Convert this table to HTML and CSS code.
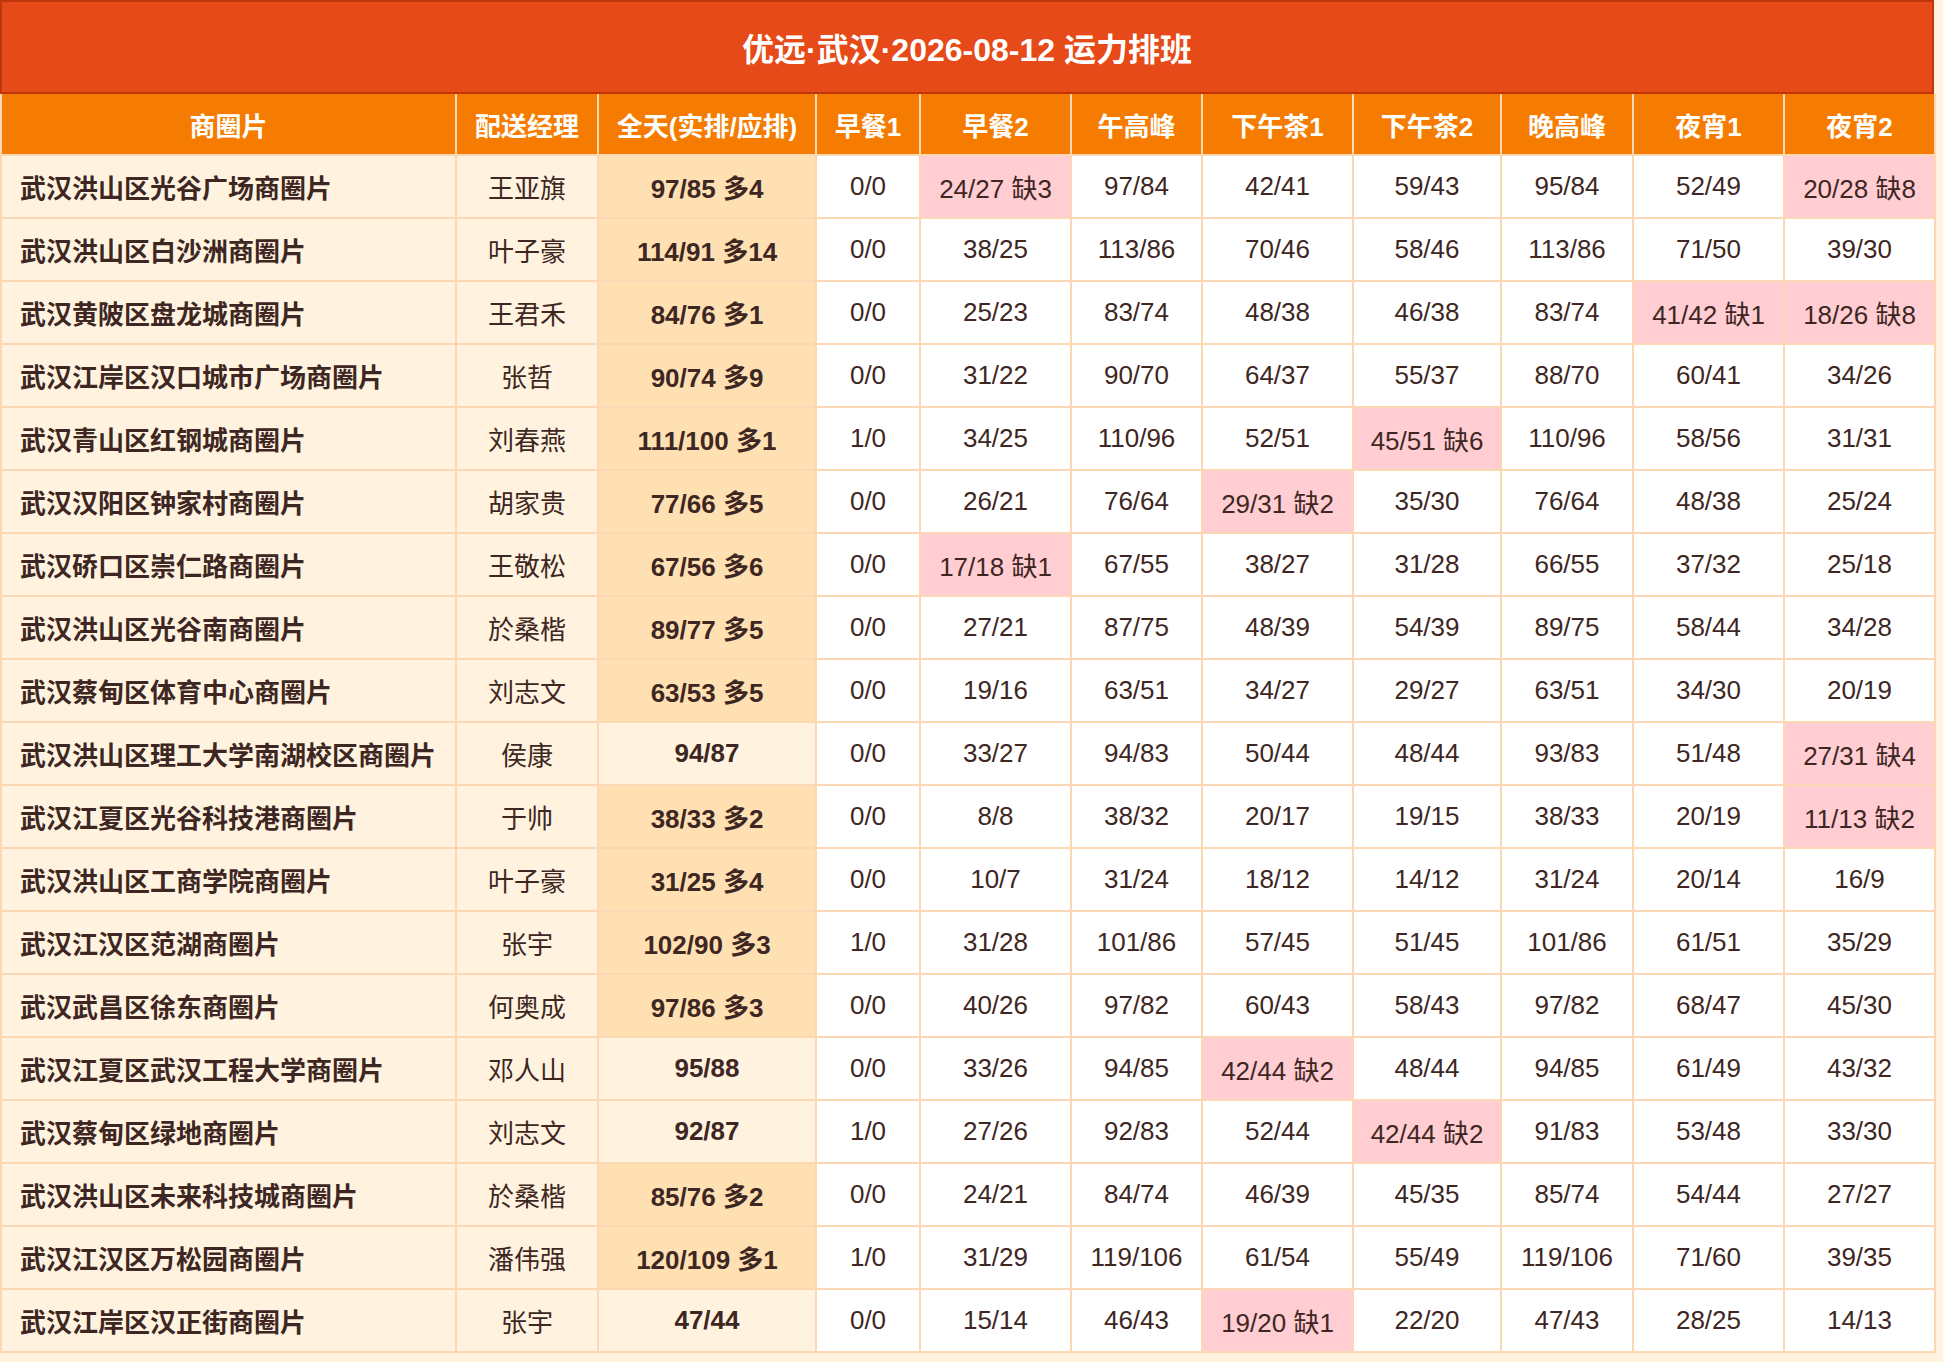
FILE: index.html
```html
<!DOCTYPE html>
<html lang="zh-CN">
<head>
<meta charset="utf-8">
<title>优远·武汉·2026-08-12 运力排班</title>
<link rel="stylesheet" href="styles.css">
</head>
<body>
<div class="page">
  <div class="title">优远·武汉·2026-08-12 运力排班</div>
  <table class="grid">
    <colgroup>
      <col class="c-area"><col class="c-mgr"><col class="c-day"><col class="c-b1"><col class="c-b2"><col class="c-noon"><col class="c-t1"><col class="c-t2"><col class="c-eve"><col class="c-n1"><col class="c-n2">
    </colgroup>
    <thead>
      <tr><th>商圈片</th><th>配送经理</th><th>全天(实排/应排)</th><th>早餐1</th><th>早餐2</th><th>午高峰</th><th>下午茶1</th><th>下午茶2</th><th>晚高峰</th><th>夜宵1</th><th>夜宵2</th></tr>
    </thead>
    <tbody>
      <tr><td class="area">武汉洪山区光谷广场商圈片</td><td class="mgr">王亚旗</td><td class="day more">97/85 多4</td><td>0/0</td><td class="short">24/27 缺3</td><td>97/84</td><td>42/41</td><td>59/43</td><td>95/84</td><td>52/49</td><td class="short">20/28 缺8</td></tr>
      <tr><td class="area">武汉洪山区白沙洲商圈片</td><td class="mgr">叶子豪</td><td class="day more">114/91 多14</td><td>0/0</td><td>38/25</td><td>113/86</td><td>70/46</td><td>58/46</td><td>113/86</td><td>71/50</td><td>39/30</td></tr>
      <tr><td class="area">武汉黄陂区盘龙城商圈片</td><td class="mgr">王君禾</td><td class="day more">84/76 多1</td><td>0/0</td><td>25/23</td><td>83/74</td><td>48/38</td><td>46/38</td><td>83/74</td><td class="short">41/42 缺1</td><td class="short">18/26 缺8</td></tr>
      <tr><td class="area">武汉江岸区汉口城市广场商圈片</td><td class="mgr">张哲</td><td class="day more">90/74 多9</td><td>0/0</td><td>31/22</td><td>90/70</td><td>64/37</td><td>55/37</td><td>88/70</td><td>60/41</td><td>34/26</td></tr>
      <tr><td class="area">武汉青山区红钢城商圈片</td><td class="mgr">刘春燕</td><td class="day more">111/100 多1</td><td>1/0</td><td>34/25</td><td>110/96</td><td>52/51</td><td class="short">45/51 缺6</td><td>110/96</td><td>58/56</td><td>31/31</td></tr>
      <tr><td class="area">武汉汉阳区钟家村商圈片</td><td class="mgr">胡家贵</td><td class="day more">77/66 多5</td><td>0/0</td><td>26/21</td><td>76/64</td><td class="short">29/31 缺2</td><td>35/30</td><td>76/64</td><td>48/38</td><td>25/24</td></tr>
      <tr><td class="area">武汉硚口区崇仁路商圈片</td><td class="mgr">王敬松</td><td class="day more">67/56 多6</td><td>0/0</td><td class="short">17/18 缺1</td><td>67/55</td><td>38/27</td><td>31/28</td><td>66/55</td><td>37/32</td><td>25/18</td></tr>
      <tr><td class="area">武汉洪山区光谷南商圈片</td><td class="mgr">於桑楷</td><td class="day more">89/77 多5</td><td>0/0</td><td>27/21</td><td>87/75</td><td>48/39</td><td>54/39</td><td>89/75</td><td>58/44</td><td>34/28</td></tr>
      <tr><td class="area">武汉蔡甸区体育中心商圈片</td><td class="mgr">刘志文</td><td class="day more">63/53 多5</td><td>0/0</td><td>19/16</td><td>63/51</td><td>34/27</td><td>29/27</td><td>63/51</td><td>34/30</td><td>20/19</td></tr>
      <tr><td class="area">武汉洪山区理工大学南湖校区商圈片</td><td class="mgr">侯康</td><td class="day">94/87</td><td>0/0</td><td>33/27</td><td>94/83</td><td>50/44</td><td>48/44</td><td>93/83</td><td>51/48</td><td class="short">27/31 缺4</td></tr>
      <tr><td class="area">武汉江夏区光谷科技港商圈片</td><td class="mgr">于帅</td><td class="day more">38/33 多2</td><td>0/0</td><td>8/8</td><td>38/32</td><td>20/17</td><td>19/15</td><td>38/33</td><td>20/19</td><td class="short">11/13 缺2</td></tr>
      <tr><td class="area">武汉洪山区工商学院商圈片</td><td class="mgr">叶子豪</td><td class="day more">31/25 多4</td><td>0/0</td><td>10/7</td><td>31/24</td><td>18/12</td><td>14/12</td><td>31/24</td><td>20/14</td><td>16/9</td></tr>
      <tr><td class="area">武汉江汉区范湖商圈片</td><td class="mgr">张宇</td><td class="day more">102/90 多3</td><td>1/0</td><td>31/28</td><td>101/86</td><td>57/45</td><td>51/45</td><td>101/86</td><td>61/51</td><td>35/29</td></tr>
      <tr><td class="area">武汉武昌区徐东商圈片</td><td class="mgr">何奥成</td><td class="day more">97/86 多3</td><td>0/0</td><td>40/26</td><td>97/82</td><td>60/43</td><td>58/43</td><td>97/82</td><td>68/47</td><td>45/30</td></tr>
      <tr><td class="area">武汉江夏区武汉工程大学商圈片</td><td class="mgr">邓人山</td><td class="day">95/88</td><td>0/0</td><td>33/26</td><td>94/85</td><td class="short">42/44 缺2</td><td>48/44</td><td>94/85</td><td>61/49</td><td>43/32</td></tr>
      <tr><td class="area">武汉蔡甸区绿地商圈片</td><td class="mgr">刘志文</td><td class="day">92/87</td><td>1/0</td><td>27/26</td><td>92/83</td><td>52/44</td><td class="short">42/44 缺2</td><td>91/83</td><td>53/48</td><td>33/30</td></tr>
      <tr><td class="area">武汉洪山区未来科技城商圈片</td><td class="mgr">於桑楷</td><td class="day more">85/76 多2</td><td>0/0</td><td>24/21</td><td>84/74</td><td>46/39</td><td>45/35</td><td>85/74</td><td>54/44</td><td>27/27</td></tr>
      <tr><td class="area">武汉江汉区万松园商圈片</td><td class="mgr">潘伟强</td><td class="day more">120/109 多1</td><td>1/0</td><td>31/29</td><td>119/106</td><td>61/54</td><td>55/49</td><td>119/106</td><td>71/60</td><td>39/35</td></tr>
      <tr><td class="area">武汉江岸区汉正街商圈片</td><td class="mgr">张宇</td><td class="day">47/44</td><td>0/0</td><td>15/14</td><td>46/43</td><td class="short">19/20 缺1</td><td>22/20</td><td>47/43</td><td>28/25</td><td>14/13</td></tr>
    </tbody>
  </table>
</div>
</body>
</html>
```
FILE: styles.css
```css
html, body {
  margin: 0;
  padding: 0;
  background: #fff3e0;
}
body {
  font-family: "Liberation Sans", "Noto Sans CJK SC", sans-serif;
  color: #3e2723;
}
.page {
  width: 1934px;
}
.title {
  box-sizing: border-box;
  height: 94px;
  border: 2px solid #bf360c;
  background: #e64a19;
  color: #ffffff;
  font-size: 32px;
  font-weight: bold;
  display: flex;
  align-items: center;
  justify-content: center;
}
.grid {
  width: 1934px;
  table-layout: fixed;
  border-collapse: collapse;
  font-size: 26px;
}
.c-area { width: 455px; }
.c-mgr { width: 142px; }
.c-day { width: 218px; }
.c-b1 { width: 104px; }
.c-b2 { width: 151px; }
.c-noon { width: 131px; }
.c-t1 { width: 151px; }
.c-t2 { width: 148px; }
.c-eve { width: 132px; }
.c-n1 { width: 151px; }
.c-n2 { width: 151px; }
.grid th {
  height: 60px;
  padding: 0;
  background: #f57c00;
  color: #ffffff;
  font-weight: bold;
  text-align: center;
  border: 2px solid #fbd7b3;
  border-top: 0;
}
.grid td {
  height: 61px;
  padding: 0;
  background: #ffffff;
  text-align: center;
  border: 2px solid #fbd7b3;
  white-space: nowrap;
}
.grid td.area {
  background: #fff3e0;
  text-align: left;
  padding-left: 18px;
  font-weight: bold;
}
.grid td.mgr {
  background: #fff3e0;
}
.grid td.day {
  background: #fff3e0;
  font-weight: bold;
}
.grid td.day.more {
  background: #ffe0b2;
}
.grid td.short {
  background: #ffcdd2;
}
```
